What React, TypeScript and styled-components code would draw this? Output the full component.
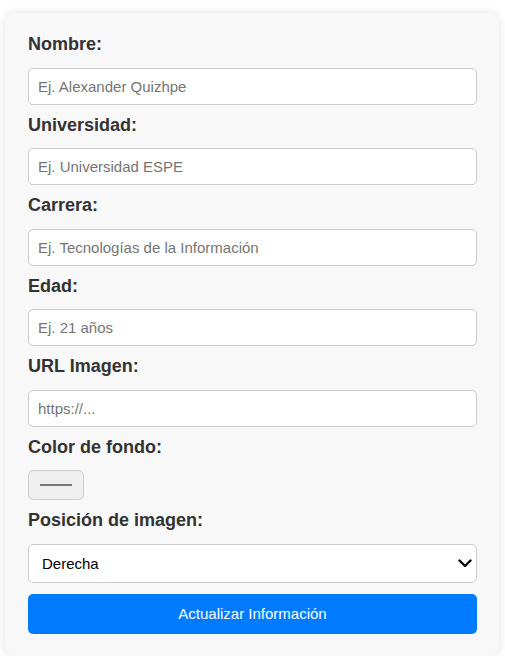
import React from 'react';
import styled, { createGlobalStyle } from 'styled-components';

const GlobalStyle = createGlobalStyle`
  body {
    margin: 0;
    background: #ffffff;
    font-family: "Liberation Sans", Arial, sans-serif;
  }
`;

const Card = styled.form`
  margin: 13px 6px 0 5px;
  padding: 21px 22px 22px 23px;
  background: #f8f8f8;
  border-radius: 10px;
  box-shadow: 0 0 10px rgba(0, 0, 0, 0.12);
  display: flex;
  flex-direction: column;
`;

const Label = styled.label`
  display: block;
  font-size: 18px;
  line-height: 20.5px;
  font-weight: bold;
  color: #333;
  margin-bottom: 13px;
`;

const TextInput = styled.input`
  box-sizing: border-box;
  width: 100%;
  height: 37px;
  padding: 0 9px;
  margin-bottom: 10px;
  border: 1px solid #ccc;
  border-radius: 5px;
  background: #fff;
  font-family: "Liberation Sans", Arial, sans-serif;
  font-size: 15px;
  color: #333;
  &::placeholder {
    color: #757575;
  }
`;

const ColorBox = styled.div`
  box-sizing: border-box;
  width: 56px;
  height: 30px;
  margin-bottom: 10px;
  border: 1px solid #ccc;
  border-radius: 5px;
  background: #efefef;
  display: flex;
  align-items: center;
  justify-content: center;
`;

const Swatch = styled.span<{ color: string }>`
  display: block;
  width: 32px;
  height: 2px;
  background: ${({ color }) => color};
`;

const SelectWrap = styled.div`
  position: relative;
  margin-bottom: 11px;
`;

const Select = styled.select`
  box-sizing: border-box;
  width: 100%;
  height: 39px;
  padding: 0 30px 0 13px;
  border: 1px solid #ccc;
  border-radius: 5px;
  background: #fff;
  appearance: none;
  font-family: "Liberation Sans", Arial, sans-serif;
  font-size: 15px;
  color: #000;
`;

const Chevron = styled.svg`
  position: absolute;
  right: 5px;
  top: 15px;
  width: 14px;
  height: 9px;
  pointer-events: none;
`;

const Button = styled.button`
  width: 100%;
  height: 40px;
  border: none;
  border-radius: 5px;
  background: #007bff;
  color: #fff;
  font-family: "Liberation Sans", Arial, sans-serif;
  font-size: 15px;
  cursor: pointer;
`;

const fields = [
  { label: 'Nombre:', placeholder: 'Ej. Alexander Quizhpe' },
  { label: 'Universidad:', placeholder: 'Ej. Universidad ESPE' },
  { label: 'Carrera:', placeholder: 'Ej. Tecnologías de la Información' },
  { label: 'Edad:', placeholder: 'Ej. 21 años' },
  { label: 'URL Imagen:', placeholder: 'https://...' },
];

export default function App() {
  return (
    <>
      <GlobalStyle />
      <Card onSubmit={(e) => e.preventDefault()}>
        {fields.map((f) => (
          <React.Fragment key={f.label}>
            <Label>{f.label}</Label>
            <TextInput type="text" placeholder={f.placeholder} />
          </React.Fragment>
        ))}
        <Label>Color de fondo:</Label>
        <ColorBox>
          <Swatch color="#777" />
        </ColorBox>
        <Label>Posición de imagen:</Label>
        <SelectWrap>
          <Select defaultValue="derecha">
            <option value="izquierda">Izquierda</option>
            <option value="derecha">Derecha</option>
          </Select>
          <Chevron viewBox="0 0 14 9">
            <path d="M1.5 1.5 L7 7 L12.5 1.5" fill="none" stroke="#000" strokeWidth="2.4" strokeLinecap="round" strokeLinejoin="round" />
          </Chevron>
        </SelectWrap>
        <Button type="submit">Actualizar Información</Button>
      </Card>
    </>
  );
}
